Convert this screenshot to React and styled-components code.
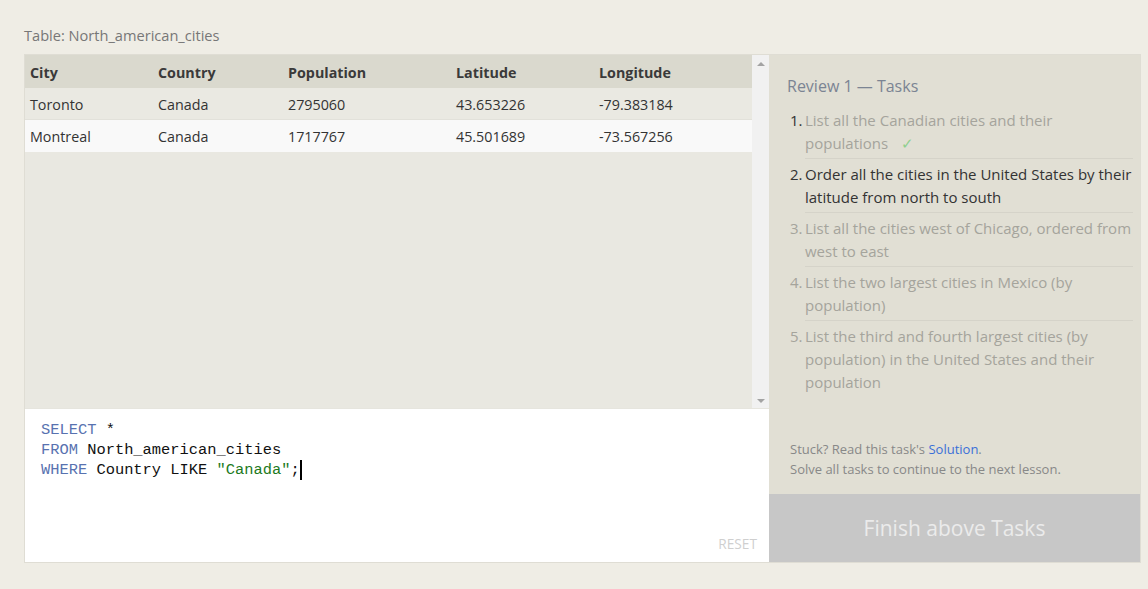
import React from "react";
import styled, { createGlobalStyle } from "styled-components";

const GlobalStyle = createGlobalStyle`
  html, body {
    margin: 0;
    padding: 0;
    background: #efede5;
    font-family: "Open Sans", "Noto Sans", sans-serif;
    color: #333;
  }
`;

const Page = styled.div`
  padding: 25px 7px 26px 24px;
`;

const Caption = styled.div`
  font-size: 14.6px;
  line-height: 20px;
  color: #777;
  margin-bottom: 9px;
`;

const Frame = styled.div`
  display: flex;
  border: 1px solid #dfddd4;
  height: 507px;
`;

const LeftPane = styled.div`
  width: 744px;
  display: flex;
  flex-direction: column;
`;

const TableArea = styled.div`
  height: 353px;
  display: flex;
  background: #e9e8e1;
`;

const TableBody = styled.div`
  flex: 1;
`;

const Row = styled.div`
  display: grid;
  grid-template-columns: 128px 130px 168px 143px 1fr;
  box-sizing: border-box;
  height: ${(p) => (p.$head ? 33 : 32)}px;
  padding-top: ${(p) => (p.$head ? 2 : 1)}px;
  align-items: center;
  background: ${(p) => p.$bg};
  border-bottom: ${(p) => (p.$line ? "1px solid #e2e1da" : "none")};
  font-size: 14.3px;
  font-weight: ${(p) => (p.$head ? 700 : 400)};
  color: ${(p) => (p.$head ? "#3a3a3a" : "#333")};
`;

const Cell = styled.div`
  padding-left: 5px;
  white-space: nowrap;
`;

const Scrollbar = styled.div`
  width: 17px;
  background: #f1f1f1;
  display: flex;
  flex-direction: column;
  justify-content: space-between;
  align-items: center;
  padding: 7px 0 5px;
  box-sizing: border-box;
`;

const Arrow = styled.div`
  width: 0;
  height: 0;
  border-left: 4px solid transparent;
  border-right: 4px solid transparent;
  ${(p) =>
    p.$down
      ? "border-top: 4px solid #a3a3a3;"
      : "border-bottom: 4px solid #a3a3a3;"}
`;

const Editor = styled.div`
  flex: 1;
  background: #fff;
  border-top: 1px solid #e6e5de;
  position: relative;
  padding: 11px 16px;
  font-family: "Liberation Mono", "DejaVu Sans Mono", monospace;
  font-size: 15.4px;
  line-height: 20px;
  color: #111;
`;

const Kw = styled.span`
  color: #5872b0;
`;

const Str = styled.span`
  color: #1d7a1d;
`;

const Caret = styled.span`
  display: inline-block;
  width: 2px;
  height: 20px;
  background: #000;
  vertical-align: top;
`;

const Reset = styled.div`
  position: absolute;
  right: 12px;
  bottom: 8px;
  font-family: "Open Sans", sans-serif;
  font-size: 13.7px;
  color: #cfcfcf;
`;

const RightPane = styled.div`
  flex: 1;
  display: flex;
  flex-direction: column;
  background: #e1dfd4;
`;

const Tasks = styled.div`
  flex: 1;
  padding: 20px 4px 0 18px;
`;

const TasksTitle = styled.div`
  font-size: 16px;
  line-height: 22px;
  color: #7b8493;
  margin-bottom: 8px;
`;

const List = styled.ol`
  list-style: none;
  margin: 0;
  padding: 0;
`;

const Item = styled.li`
  display: flex;
  font-size: 15px;
  line-height: 23px;
  color: ${(p) => (p.$active ? "#333" : "#a5a49c")};
`;

const Num = styled.span`
  width: 15px;
  padding: 4px 0 0 3px;
  flex-shrink: 0;
  color: ${(p) => (p.$dark ? "#333" : "inherit")};
`;

const ItemText = styled.div`
  flex: 1;
  padding: 4px 0 3px;
  margin-right: 3px;
  border-bottom: ${(p) => (p.$last ? "none" : "1px solid #d5d3c9")};
`;

const Check = styled.span`
  display: inline-block;
  line-height: 23px;
  color: #8fcf8f;
  margin-left: 13px;
`;

const Help = styled.div`
  padding: 0 18px 15px 21px;
  font-size: 13px;
  line-height: 20px;
  color: #888;
`;

const Link = styled.a`
  color: #3a6fd8;
  text-decoration: none;
`;

const FinishButton = styled.div`
  height: 68px;
  background: #c7c7c7;
  color: #ebebeb;
  font-size: 21px;
  display: flex;
  align-items: center;
  justify-content: center;
`;

const rows = [
  ["Toronto", "Canada", "2795060", "43.653226", "-79.383184"],
  ["Montreal", "Canada", "1717767", "45.501689", "-73.567256"],
];

const tasks = [
  "List all the Canadian cities and their populations",
  "Order all the cities in the United States by their latitude from north to south",
  "List all the cities west of Chicago, ordered from west to east",
  "List the two largest cities in Mexico (by population)",
  "List the third and fourth largest cities (by population) in the United States and their population",
];

export default function App() {
  return (
    <Page>
      <GlobalStyle />
      <Caption>Table: North_american_cities</Caption>
      <Frame>
        <LeftPane>
          <TableArea>
            <TableBody>
              <Row $head $bg="#dad9ce">
                {["City", "Country", "Population", "Latitude", "Longitude"].map(
                  (h) => (
                    <Cell key={h}>{h}</Cell>
                  )
                )}
              </Row>
              {rows.map((r, i) => (
                <Row key={r[0]} $bg={i === 0 ? "#eae9e2" : "#f9f9f9"} $line={i === 0}>
                  {r.map((c, j) => (
                    <Cell key={j}>{c}</Cell>
                  ))}
                </Row>
              ))}
            </TableBody>
            <Scrollbar>
              <Arrow />
              <Arrow $down />
            </Scrollbar>
          </TableArea>
          <Editor>
            <div>
              <Kw>SELECT</Kw> *
            </div>
            <div>
              <Kw>FROM</Kw> North_american_cities
            </div>
            <div>
              <Kw>WHERE</Kw> Country LIKE <Str>"Canada"</Str>;<Caret />
            </div>
            <Reset>RESET</Reset>
          </Editor>
        </LeftPane>
        <RightPane>
          <Tasks>
            <TasksTitle>Review 1 — Tasks</TasksTitle>
            <List>
              {tasks.map((t, i) => (
                <Item key={i} $active={i === 1}>
                  <Num $dark={i < 2}>{i + 1}.</Num>
                  <ItemText $last={i === tasks.length - 1}>
                    {t}
                    {i === 0 && <Check>✓</Check>}
                  </ItemText>
                </Item>
              ))}
            </List>
          </Tasks>
          <Help>
            Stuck? Read this task's <Link href="#">Solution</Link>.
            <br />
            Solve all tasks to continue to the next lesson.
          </Help>
          <FinishButton>Finish above Tasks</FinishButton>
        </RightPane>
      </Frame>
    </Page>
  );
}
